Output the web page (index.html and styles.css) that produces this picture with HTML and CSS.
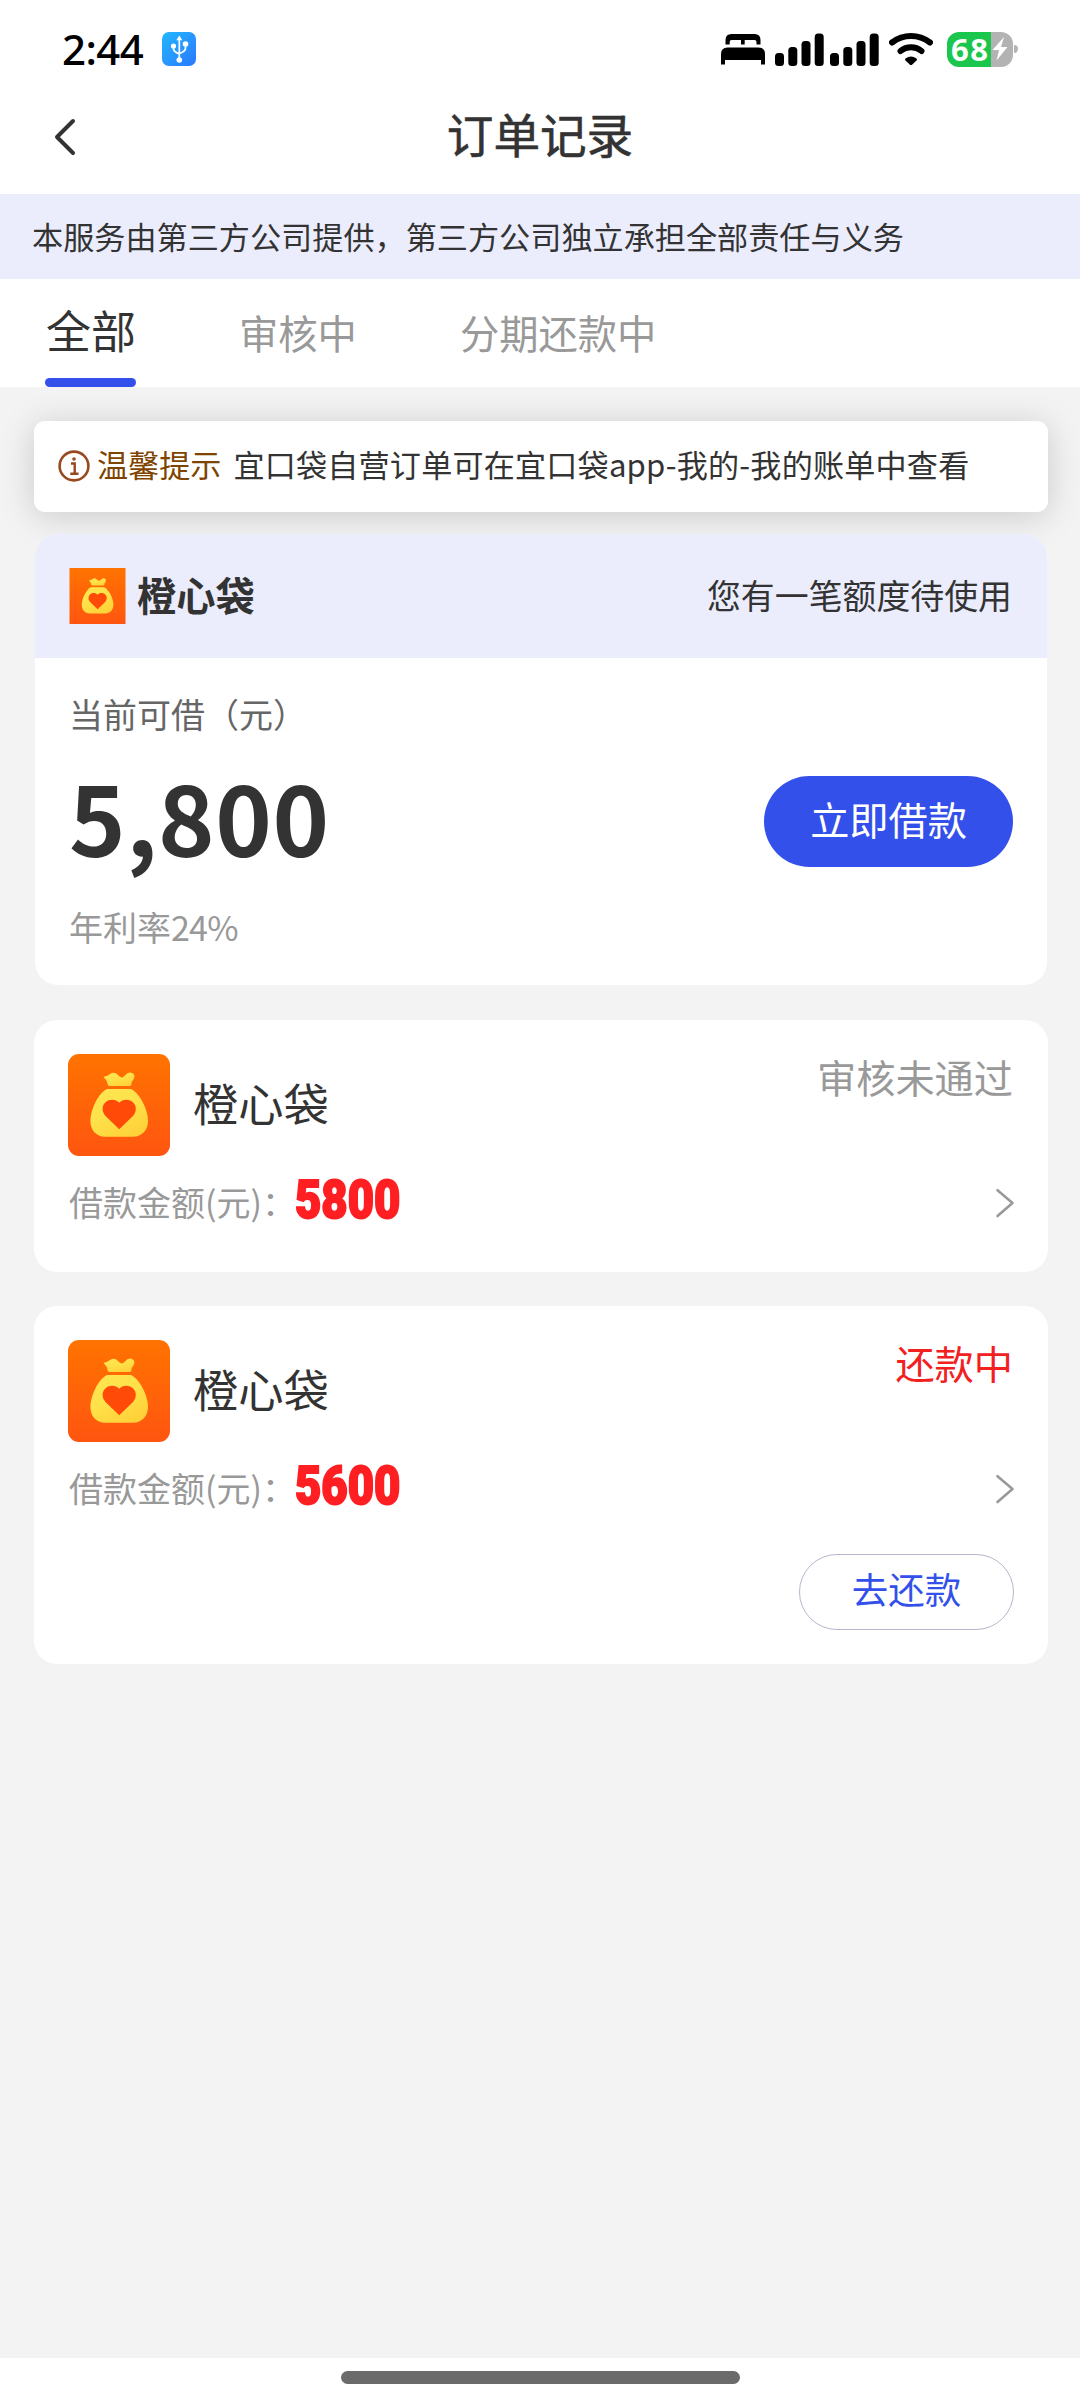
FILE: index.html
```html
<!DOCTYPE html>
<html lang="zh-CN">
<head>
<meta charset="utf-8">
<title>订单记录</title>
<link rel="stylesheet" href="styles.css">
</head>
<body>
<svg class="defs" aria-hidden="true">
  <defs>
    <linearGradient id="orange" x1="0" y1="0" x2="0" y2="1"><stop offset="0" stop-color="#ff7300"/><stop offset="1" stop-color="#ff5510"/></linearGradient>
    <linearGradient id="gold" x1="0" y1="0" x2="0.6" y2="1"><stop offset="0" stop-color="#ffe552"/><stop offset="0.5" stop-color="#ffe24a"/><stop offset="1" stop-color="#ffd23a"/></linearGradient>
    <linearGradient id="blue" x1="0" y1="0" x2="1" y2="1"><stop offset="0" stop-color="#22b8ff"/><stop offset="1" stop-color="#2a78ff"/></linearGradient>
    <symbol id="bag" viewBox="0 0 102 102">
      <rect width="102" height="102" fill="url(#orange)"/>
      <path d="M35.500 22.800Q39 22.600 42 20Q46.500 17 50 21Q53.500 25.500 57 21.500Q60 17.600 63.500 18.800Q67.500 20.500 66 24.500Q63.500 27.500 63.300 30.500Q63 32 61.500 32H41.500Q40 32 39.700 30.500Q39.200 26.500 35.500 22.800Z" fill="url(#gold)"/>
      <path d="M39 35H63C71 38.500 80 55 80 67C80 76 74 82.700 65 82.700H37C28 82.700 22.400 76 22.400 67C22.400 55 31 38.500 39 35Z" fill="url(#gold)"/>
      <path d="M51.200 75.300L37.500 62C32.500 56 34.500 49 40 46.500C44.500 44.800 48.500 45.800 51.200 48.700C54 45.800 58 44.800 62.300 46.500C68 49 70 56 65 62Z" fill="#ff4a08"/>
    </symbol>
    <symbol id="signal" viewBox="0 0 49 33">
      <rect x="0" y="20" width="9" height="13" rx="3.500"/><rect x="13.300" y="14" width="9" height="19" rx="3.500"/><rect x="26.500" y="8" width="9" height="25" rx="3.500"/><rect x="39.700" y="0.500" width="9" height="32.500" rx="3.500"/>
    </symbol>
    <symbol id="arrow" viewBox="0 0 20 32">
      <path d="M2.500 3.200L17.500 16L2.500 29" fill="none" stroke="#999" stroke-width="2.600" stroke-linejoin="round" stroke-linecap="round"/>
    </symbol>
  </defs>
</svg>

<div class="screen">
  <div class="status-bar">
    <span class="clock">2:44</span>
    <svg class="usb" viewBox="0 0 34 34">
      <rect width="34" height="34" rx="7" fill="url(#blue)"/>
      <path d="M17.300 8V28M11.500 14V17Q11.500 19.500 17.300 22M23.500 12V16Q23.500 19.500 17.300 21.500" fill="none" stroke="#fff" stroke-width="1.700"/>
      <path d="M17.300 3.500L20.300 8.200H14.300Z" fill="#fff"/>
      <circle cx="17.300" cy="28" r="2.800" fill="#fff"/><circle cx="11.500" cy="14" r="2.600" fill="#fff"/><circle cx="23.500" cy="12" r="2.800" fill="#fff"/>
    </svg>
    <div class="status-icons">
      <svg class="bed" viewBox="0 0 44 32">
        <path d="M4.500 11.500V7Q4.500 1 10.500 1H33.500Q39.500 1 39.500 7V11.500H35.500V9Q35.500 7 33.500 7H23.700V11.500H20V7H10.500Q8.700 7 8.700 9V11.500Z"/>
        <path d="M0 31.500V21Q0 14.500 6.500 14.500H37.500Q44 14.500 44 21V31.500H40V27H4V31.500Z"/>
      </svg>
      <svg class="signal"><use href="#signal"/></svg>
      <svg class="signal second"><use href="#signal"/></svg>
      <svg class="wifi" viewBox="0 0 44 34">
        <path d="M3 10.500Q11.500 4 22 4T41 10.500" fill="none" stroke="#000" stroke-width="6" stroke-linecap="round"/>
        <path d="M11.500 19Q16 15.300 22 15.300T32.500 19" fill="none" stroke="#000" stroke-width="6" stroke-linecap="round"/>
        <path d="M16.500 26.500Q22 22.500 27.500 26.500Q28.500 27.500 27.500 28.600L23.300 32.500Q22 33.500 20.700 32.500L16.500 28.600Q15.500 27.500 16.500 26.500Z"/>
      </svg>
      <div class="battery">
        <span class="battery-level">68</span>
        <svg class="bolt" viewBox="0 0 16 24"><path d="M12 0L0.500 13H7L4.500 23.500L15.500 10H9Z" fill="#fff"/></svg>
      </div>
      <i class="battery-tip"></i>
    </div>
  </div>

  <header class="nav">
    <svg class="back" viewBox="0 0 24 40"><path d="M20 4L4 20L20 36" fill="none" stroke="#333" stroke-width="4" stroke-linecap="round" stroke-linejoin="round"/></svg>
    <h1 class="nav-title">订单记录</h1>
  </header>

  <div class="banner">本服务由第三方公司提供，第三方公司独立承担全部责任与义务</div>

  <nav class="tabs">
    <div class="tab active"><span class="tab-label">全部</span><i class="tab-line"></i></div>
    <div class="tab"><span class="tab-label">审核中</span></div>
    <div class="tab"><span class="tab-label">分期还款中</span></div>
  </nav>

  <main class="list">
    <div class="notice">
      <svg class="info" viewBox="0 0 32 32"><circle cx="16" cy="16" r="14.400" fill="none" stroke="#98491f" stroke-width="2.600"/><path d="M13 13.500H16.700V23.500M12.300 23.800H20.500" fill="none" stroke="#98491f" stroke-width="2.400"/><circle cx="16" cy="9" r="1.800" fill="#98491f"/></svg>
      <span class="notice-tag">温馨提示</span>
      <span class="notice-text">宜口袋自营订单可在宜口袋app-我的-我的账单中查看</span>
    </div>

    <section class="card offer">
      <div class="offer-head">
        <svg class="logo-small"><use href="#bag"/></svg>
        <strong class="offer-name">橙心袋</strong>
        <span class="offer-tip">您有一笔额度待使用</span>
      </div>
      <div class="offer-body">
        <div class="offer-label">当前可借（元）</div>
        <div class="offer-row">
          <span class="offer-amount">5,800</span>
          <button class="btn-primary">立即借款</button>
        </div>
        <div class="offer-rate">年利率<span class="rate-value">24%</span></div>
      </div>
    </section>

    <section class="card order rejected">
      <div class="order-head">
        <svg class="logo"><use href="#bag"/></svg>
        <span class="order-name">橙心袋</span>
        <span class="order-status">审核未通过</span>
      </div>
      <div class="order-row">
        <span class="order-label">借款金额(元)：</span>
        <span class="order-amount">5800</span>
        <svg class="arrow"><use href="#arrow"/></svg>
      </div>
    </section>

    <section class="card order repaying">
      <div class="order-head">
        <svg class="logo"><use href="#bag"/></svg>
        <span class="order-name">橙心袋</span>
        <span class="order-status">还款中</span>
      </div>
      <div class="order-row">
        <span class="order-label">借款金额(元)：</span>
        <span class="order-amount">5600</span>
        <svg class="arrow"><use href="#arrow"/></svg>
      </div>
      <button class="btn-outline">去还款</button>
    </section>
  </main>

  <footer class="home"><i class="home-bar"></i></footer>
</div>
</body>
</html>
```
FILE: styles.css
```css
* { box-sizing: border-box; }
body {
  margin: 0;
  background: #f3f3f3;
  color: #333;
  font-family: "Noto Sans CJK SC", sans-serif;
}
svg { display: block; flex: none; }
button { font-family: inherit; padding: 0; }
.defs { position: absolute; width: 0; height: 0; }

.screen {
  width: 1080px;
  height: 2400px;
  display: flex;
  flex-direction: column;
  overflow: hidden;
}

.status-bar {
  height: 80px;
  padding: 18px 62px 0 62px;
  display: flex;
  align-items: center;
  background: #fff;
}
.clock {
  width: 100px;
  font: 500 42px/62px "Noto Sans", sans-serif;
  letter-spacing: -0.6px;
  color: #000;
}
.usb { width: 34px; height: 34px; }
.status-icons { margin-left: auto; display: flex; align-items: center; }
.bed { width: 44px; height: 32px; margin-right: 10px; }
.signal { width: 49px; height: 33px; }
.second { margin: 0 10px 0 6px; }
.wifi { width: 44px; height: 34px; margin-right: 14px; }
.battery {
  width: 66px;
  height: 35px;
  display: flex;
  align-items: center;
  border-radius: 12px;
  background: linear-gradient(90deg, #1bc64c 44px, #b3b3b3 44px);
}
.battery-level {
  width: 45px;
  padding-left: 4px;
  font: 700 31px/35px "Open Sans", sans-serif;
  letter-spacing: 1.6px;
  color: #fff;
}
.bolt { width: 16px; height: 24px; }
.battery-tip { width: 4px; height: 8px; margin-left: 1px; border-radius: 0 4px 4px 0; background: #b3b3b3; }

.nav {
  height: 114px;
  padding: 0 53px;
  display: grid;
  grid-template-columns: 24px 1fr 24px;
  align-items: center;
  background: #fff;
}
.back { width: 24px; height: 40px; }
.nav-title {
  margin: 0;
  padding-bottom: 8px;
  text-align: center;
  font-size: 46.6px;
  line-height: 60px;
  font-weight: 400;
  -webkit-text-stroke: 0.6px #333;
}

.banner {
  height: 85px;
  padding: 0 32px 2px;
  font-size: 31.15px;
  line-height: 83px;
  background: #ebedfd;
  white-space: nowrap;
}

.tabs {
  height: 108px;
  padding-left: 45px;
  display: flex;
  gap: 103px;
  background: #fff;
  position: relative;
  z-index: 1;
}
.tab { font-size: 39.3px; line-height: 106px; color: #999; }
.tab.active {
  width: 91px;
  display: flex;
  flex-direction: column;
  font-size: 45px;
  line-height: 99px;
  color: #333;
  white-space: nowrap;
}
.active .tab-label { height: 99px; padding: 1px 0 0 1px; }
.tab-line { width: 91px; height: 9px; border-radius: 5px; background: #3450eb; }

.list { flex: 1; padding: 34px 32px 0 34px; }

.notice {
  height: 91px;
  padding: 0 0 5px 24px;
  display: flex;
  align-items: center;
  font-size: 31.1px;
  line-height: 86px;
  white-space: nowrap;
  border-radius: 11px;
  background: #fff;
  box-shadow: 0 4px 34px rgba(0, 0, 0, 0.17);
}
.info { width: 32px; height: 32px; margin: 3px 7px 0 0; }
.notice-tag { color: #7e4400; margin-right: 12px; }
.notice-text { letter-spacing: 0.2px; }

.card { position: relative; border-radius: 23px; background: #fff; overflow: hidden; }

.offer { margin: 22px 1px 0; height: 451px; }
.offer-head {
  height: 124px;
  padding: 0 35px 0 34px;
  display: flex;
  align-items: center;
  background: #ebedfd;
}
.logo-small { width: 57px; height: 56px; }
.offer-name { margin-left: 11px; padding-bottom: 5px; font-size: 39.3px; line-height: 50px; font-weight: 700; }
.offer-tip { margin-left: auto; padding-bottom: 2px; font-size: 33.9px; line-height: 50px; }
.offer-body { padding: 34px 34px 0 34px; }
.offer-label { font-size: 34px; line-height: 44px; color: #666; }
.offer-row {
  height: 100px;
  margin: 29px 0 39px;
  display: flex;
  align-items: center;
  justify-content: space-between;
}
.offer-amount { padding-top: 2px; font-size: 96px; line-height: 102px; font-weight: 700; letter-spacing: 0.6px; }
.btn-primary {
  width: 249px;
  height: 91px;
  margin-top: 13px;
  padding-bottom: 8px;
  border: 0;
  border-radius: 46px;
  background: #3450eb;
  color: #fff;
  font-size: 39.2px;
}
.offer-rate { font-size: 34px; line-height: 46px; color: #999; }
.rate-value { letter-spacing: -0.8px; }

.order { padding: 34px 35px 0 34px; }
.rejected { margin-top: 35px; height: 252px; }
.repaying { margin-top: 34px; height: 358px; }
.order-head { height: 102px; display: flex; align-items: center; }
.logo { width: 102px; height: 102px; border-radius: 11px; }
.order-name { margin-left: 23px; padding-bottom: 7px; font-size: 45.3px; line-height: 60px; }
.order-status { margin-left: auto; align-self: flex-start; font-size: 39.2px; line-height: 45px; color: #999; }
.repaying .order-status { color: #f2201f; }
.order-row {
  height: 62px;
  margin-top: 16px;
  display: flex;
  align-items: center;
  font-size: 34px;
  line-height: 58px;
}
.order-label { width: 227px; padding: 0 0 3px 1px; color: #999; white-space: nowrap; }
.order-amount {
  margin-bottom: 7px;
  font: 900 53.5px/54px Roboto, sans-serif;
  -webkit-text-stroke: 2px #ff1f22;
  color: #ff1f22;
  transform: scaleX(0.85);
  transform-origin: left center;
}
.arrow { width: 20px; height: 32px; margin: 0 -2px 0 auto; }
.btn-outline {
  display: block;
  width: 215px;
  height: 76px;
  margin: 34px -1px 0 auto;
  padding-bottom: 8px;
  border: 1px solid #b4b6cc;
  border-radius: 38px;
  background: #fff;
  color: #3450eb;
  font-size: 36.5px;
}

.home { height: 42px; padding-top: 13px; background: #fff; }
.home-bar { display: block; width: 399px; height: 13px; margin: 0 auto; border-radius: 7px; background: #6b6b6b; }
```
